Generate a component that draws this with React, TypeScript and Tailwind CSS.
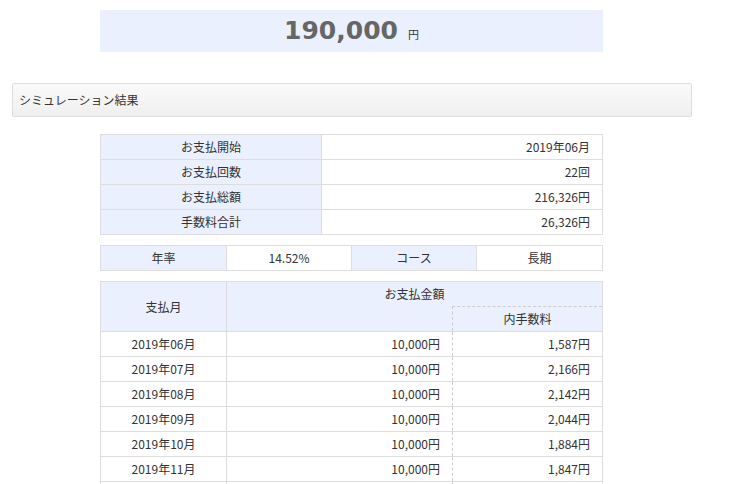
export default function App() {
  const f = { fontFamily: '"Noto Sans CJK JP", "Noto Sans", sans-serif' };
  const rows = [
    ["2019年06月", "1,587円"],
    ["2019年07月", "2,166円"],
    ["2019年08月", "2,142円"],
    ["2019年09月", "2,044円"],
    ["2019年10月", "1,884円"],
    ["2019年11月", "1,847円"],
    ["2019年12月", "1,800円"],
  ];
  const b = "border border-[#dddddd]";
  return (
    <div className="w-[736px] h-[484px] overflow-hidden bg-white text-[12px] text-[#333]" style={f}>
      <div className="pt-[10px] pl-[100px]">
        <div className="w-[503px] h-[42px] bg-[#eaf0fd] flex items-center justify-center text-[#666]">
          <span className="text-[25px] font-bold" style={{ fontFamily: '"DejaVu Sans", sans-serif' }}>190,000</span>
          <span className="text-[11px] ml-[10px] mt-[6px] text-[#333]">円</span>
        </div>
      </div>
      <div className="ml-[12px] mt-[31px] w-[680px] h-[34px] border border-[#dddddd] rounded-[2px] bg-gradient-to-b from-[#fafafa] to-[#efefef] flex items-center pl-[6px] text-[12px]">
        シミュレーション結果
      </div>
      <div className="ml-[100px] mt-[17px] w-[503px]">
        <table className="w-full border-collapse">
          <tbody>
            {[["お支払開始","2019年06月"],["お支払回数","22回"],["お支払総額","216,326円"],["手数料合計","26,326円"]].map(([a,c]) => (
              <tr key={a} className="h-[25px]">
                <td className={`${b} bg-[#eaf0fd] text-center w-[221px] p-0`}>{a}</td>
                <td className={`${b} text-right pr-[12px] p-0`}>{c}</td>
              </tr>
            ))}
          </tbody>
        </table>
        <table className="w-full border-collapse mt-[10px]">
          <tbody>
            <tr className="h-[25px]">
              <td className={`${b} bg-[#eaf0fd] text-center w-[126px] p-0`}>年率</td>
              <td className={`${b} text-center w-[125px] p-0`}>14.52%</td>
              <td className={`${b} bg-[#eaf0fd] text-center w-[125px] p-0`}>コース</td>
              <td className={`${b} text-center p-0`}>長期</td>
            </tr>
          </tbody>
        </table>
        <table className="w-full border-collapse mt-[10px]">
          <tbody>
            <tr className="h-[25px]">
              <td rowSpan={2} className={`${b} bg-[#eaf0fd] text-center w-[126px] p-0`}>支払月</td>
              <td colSpan={2} className="border-t border-r border-[#dddddd] bg-[#eaf0fd] text-center p-0">お支払金額</td>
            </tr>
            <tr className="h-[25px]">
              <td className="border-b border-[#dddddd] bg-[#eaf0fd] w-[226px] p-0"></td>
              <td className="bg-[#eaf0fd] text-center p-0" style={{ borderTop: "1px dashed #cccccc", borderLeft: "1px dashed #cccccc", borderRight: "1px solid #dddddd", borderBottom: "1px solid #dddddd" }}>内手数料</td>
            </tr>
            {rows.map(([m, fee]) => (
              <tr key={m} className="h-[25px]">
                <td className={`${b} text-center p-0`}>{m}</td>
                <td className="border-y border-[#dddddd] text-right pr-[12px] p-0">10,000円</td>
                <td className="border-y border-r border-[#dddddd] text-right pr-[12px] p-0" style={{ borderLeft: "1px dashed #cccccc" }}>{fee}</td>
              </tr>
            ))}
          </tbody>
        </table>
      </div>
    </div>
  );
}
